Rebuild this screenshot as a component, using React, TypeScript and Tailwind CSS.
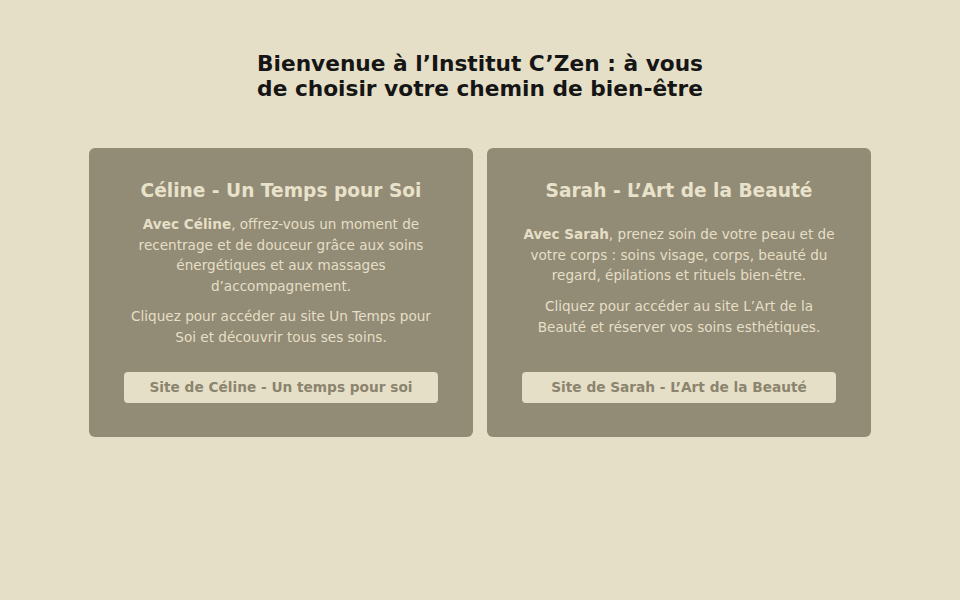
const cards = [
  {
    title: 'Céline - Un Temps pour Soi',
    name: 'Avec Céline',
    intro: ', offrez-vous un moment de recentrage et de douceur grâce aux soins énergétiques et aux massages d’accompagnement.',
    cta: 'Cliquez pour accéder au site Un Temps pour Soi et découvrir tous ses soins.',
    button: 'Site de Céline - Un temps pour soi',
  },
  {
    title: 'Sarah - L’Art de la Beauté',
    name: 'Avec Sarah',
    intro: ', prenez soin de votre peau et de votre corps : soins visage, corps, beauté du regard, épilations et rituels bien-être.',
    cta: 'Cliquez pour accéder au site L’Art de la Beauté et réserver vos soins esthétiques.',
    button: 'Site de Sarah - L’Art de la Beauté',
  },
]

export default function App() {
  return (
    <div className="min-h-screen bg-[#e6dfc7] pt-[51px] font-['DejaVu_Sans',sans-serif]">
      <h1 className="text-center text-[21.7px] font-bold leading-[25px] text-[#151515]">
        Bienvenue à l’Institut C’Zen : à vous
        <br />
        de choisir votre chemin de bien-être
      </h1>

      <div className="mx-auto mt-[47px] grid w-[782px] grid-cols-2 gap-[14px]">
        {cards.map((card, idx) => (
          <div key={idx} className="flex flex-col rounded-md bg-[#928b75] px-[35px] pb-[34px] pt-[30px] text-center">
            <h2 className="text-[18.6px] font-bold leading-[26px] text-[#e9e2cb]">{card.title}</h2>
            <div className="flex flex-1 flex-col justify-center py-[10px] text-[13.6px] leading-[20.6px] text-[#e6dfc7]">
              <p>
                <span className="font-bold">{card.name}</span>
                {card.intro}
              </p>
              <p className="mt-[10px]">{card.cta}</p>
            </div>
            <a
              href="#"
              className="mt-[14px] flex h-[31px] items-center justify-center rounded-[4px] bg-[#e6dfc7] text-[13.7px] font-bold text-[#8b846e]"
            >
              {card.button}
            </a>
          </div>
        ))}
      </div>
    </div>
  )
}
